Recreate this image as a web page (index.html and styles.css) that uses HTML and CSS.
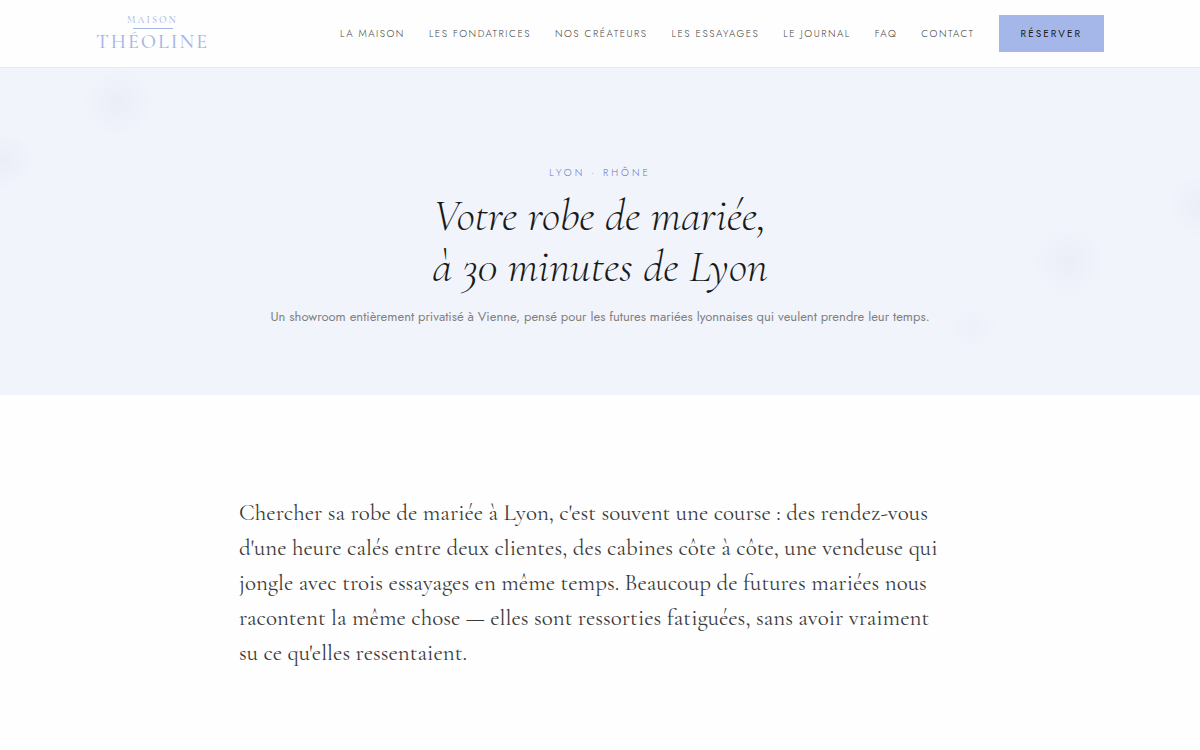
FILE: index.html
```html
<!DOCTYPE html>
<html lang="fr">
<head>
<meta charset="utf-8">
<meta name="viewport" content="width=device-width, initial-scale=1">
<title>Robe de mariée Lyon – Maison Théoline</title>
<link rel="stylesheet" href="styles.css">
</head>
<body>
<header class="header">
  <a class="logo" href="#">
    <span class="logo-top">Maison</span>
    <span class="logo-rule"></span>
    <span class="logo-name">Théoline</span>
  </a>
  <nav class="nav">
    <a href="#">La Maison</a>
    <a href="#">Les Fondatrices</a>
    <a href="#">Nos Créateurs</a>
    <a href="#">Les Essayages</a>
    <a href="#">Le Journal</a>
    <a href="#">FAQ</a>
    <a href="#">Contact</a>
    <a class="nav-cta" href="#">Réserver</a>
  </nav>
</header>
<main>
  <section class="hero">
    <p class="eyebrow">Lyon · Rhône</p>
    <h1 class="title">Votre robe de mariée,<br>à 30 minutes de Lyon</h1>
    <p class="subtitle">Un showroom entièrement privatisé à Vienne, pensé pour les futures mariées lyonnaises qui veulent prendre leur temps.</p>
  </section>
  <section class="intro">
    <p class="intro-text">Chercher sa robe de mariée à Lyon, c'est souvent une course : des rendez-vous d'une heure calés entre deux clientes, des cabines côte à côte, une vendeuse qui jongle avec trois essayages en même temps. Beaucoup de futures mariées nous racontent la même chose — elles sont ressorties fatiguées, sans avoir vraiment su ce qu'elles ressentaient.</p>
  </section>
</main>
</body>
</html>
```
FILE: styles.css
```css
* {
  box-sizing: border-box;
}

body {
  margin: 0;
  background: #fefefe;
  color: #1a1a1a;
  font-family: "Jost", "Lato", sans-serif;
  font-weight: 300;
}

a {
  color: inherit;
  text-decoration: none;
}

.header {
  display: flex;
  align-items: center;
  justify-content: space-between;
  padding: 15px 8%;
  border-bottom: 1px solid #e6eaf3;
}

.logo {
  display: flex;
  flex-direction: column;
  align-items: center;
  font-family: "Cormorant Garamond", "Liberation Serif", serif;
  font-weight: 500;
  color: #a9b7e6;
  text-transform: uppercase;
}

.logo-top {
  font-size: 10px;
  line-height: 10px;
  letter-spacing: 2px;
}

.logo-rule {
  width: 40px;
  height: 1px;
  margin: 3px 0;
  background: #a5b6e9;
}

.logo-name {
  font-size: 20px;
  line-height: 20px;
  letter-spacing: 2px;
}

.nav {
  display: flex;
  align-items: center;
  gap: 24px;
  font-size: 10px;
  line-height: 15px;
  letter-spacing: 0.15em;
  text-transform: uppercase;
  color: #444;
}

.nav-cta {
  padding: 11px 22px;
  background: #a5b6e9;
  color: #1a1a1a;
  font-weight: 400;
  letter-spacing: 0.2em;
}

.hero {
  padding: 97px 8% 67px;
  text-align: center;
  background:
    radial-gradient(circle at 118px 34px, #ebeef8, #f1f4fb 36px, transparent 36px),
    radial-gradient(circle at 4px 92px, #ebeef8, #f1f4fb 30px, transparent 30px),
    radial-gradient(circle at 89% 194px, #ebeef8, #f1f4fb 38px, transparent 38px),
    radial-gradient(circle at 81% 260px, #edf0f9, #f1f4fb 26px, transparent 26px),
    radial-gradient(circle at 100% 138px, #ebeef8, #f1f4fb 32px, transparent 32px),
    #f1f4fb;
}

.eyebrow {
  margin: 0 0 9px;
  font-size: 10px;
  line-height: 16px;
  letter-spacing: 3px;
  text-transform: uppercase;
  color: #6678c8;
}

.title {
  margin: 0 0 14px;
  font-family: "Cormorant Garamond", "Liberation Serif", serif;
  font-size: 45px;
  line-height: 51px;
  font-style: italic;
  font-weight: 300;
}

.subtitle {
  margin: 0;
  font-size: 13px;
  line-height: 22px;
  font-weight: 400;
  color: #808080;
}

.intro {
  max-width: 722px;
  margin: 0 auto;
  padding: 101px 0 79px;
}

.intro-text {
  max-width: 712px;
  margin: 0;
  font-family: "Cormorant Garamond", "Liberation Serif", serif;
  font-size: 23px;
  font-weight: 400;
  line-height: 35px;
  color: #3a3a3a;
}
```
